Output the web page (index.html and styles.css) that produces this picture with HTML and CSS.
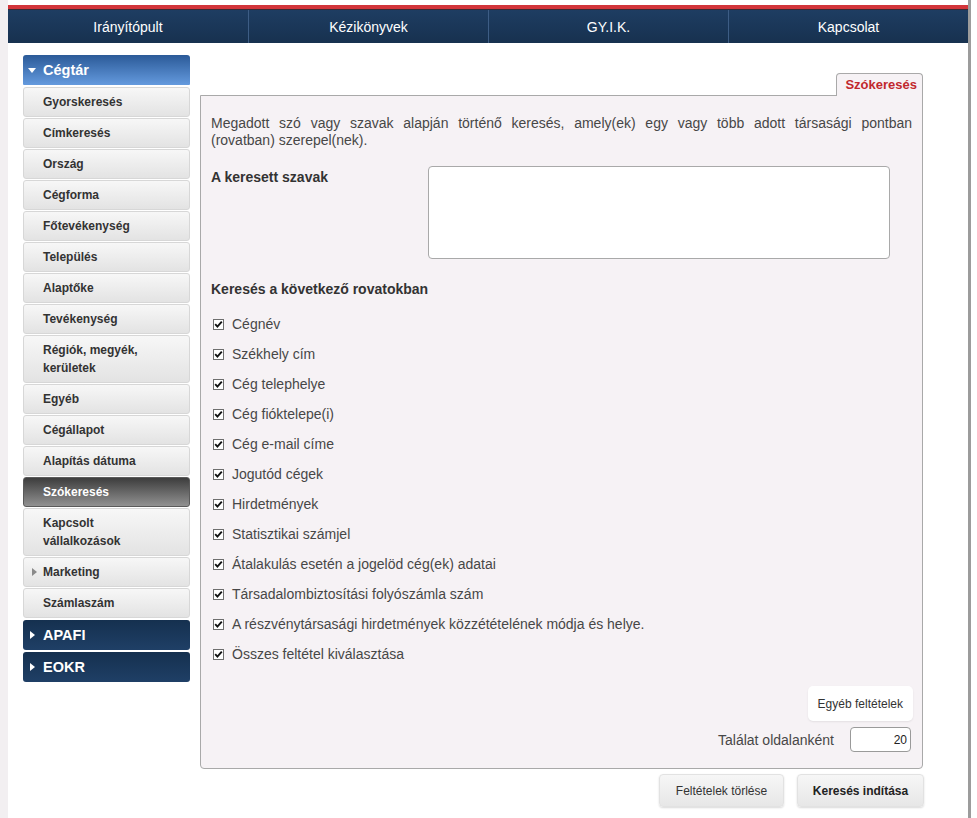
FILE: index.html
```html
<!DOCTYPE html>
<html lang="hu">
<head>
<meta charset="utf-8">
<title>Szókeresés</title>
<link rel="stylesheet" href="styles.css">
</head>
<body>
<div class="frame">
  <div class="topline"></div>
  <nav class="nav">
    <a class="nav-item">Irányítópult</a>
    <a class="nav-item">Kézikönyvek</a>
    <a class="nav-item">GY.I.K.</a>
    <a class="nav-item">Kapcsolat</a>
  </nav>
  <div class="layout">
    <aside class="side">
      <div class="sec sec-open"><span class="tri-down"></span>Cégtár</div>
      <div class="item">Gyorskeresés</div>
      <div class="item">Címkeresés</div>
      <div class="item">Ország</div>
      <div class="item">Cégforma</div>
      <div class="item">Főtevékenység</div>
      <div class="item">Település</div>
      <div class="item">Alaptőke</div>
      <div class="item">Tevékenység</div>
      <div class="item item-2">Régiók, megyék,<br>kerületek</div>
      <div class="item">Egyéb</div>
      <div class="item">Cégállapot</div>
      <div class="item">Alapítás dátuma</div>
      <div class="item active">Szókeresés</div>
      <div class="item item-2">Kapcsolt<br>vállalkozások</div>
      <div class="item has-sub"><span class="tri-right grey"></span>Marketing</div>
      <div class="item">Számlaszám</div>
      <div class="sec sec-closed"><span class="tri-right"></span>APAFI</div>
      <div class="sec sec-closed"><span class="tri-right"></span>EOKR</div>
    </aside>
    <main class="main">
      <div class="tabs"><div class="tab">Szókeresés</div></div>
      <div class="panel">
        <p class="intro"><span class="intro-l1">Megadott szó vagy szavak alapján történő keresés, amely(ek) egy vagy több adott társasági pontban</span>(rovatban) szerepel(nek).</p>
        <div class="words">
          <label class="words-label" for="szavak">A keresett szavak</label>
          <textarea class="words-input" id="szavak"></textarea>
        </div>
        <h3 class="subhead">Keresés a következő rovatokban</h3>
        <ul class="checks">
          <li class="check"><span class="cb"><svg viewBox="0 0 9 9" width="9" height="9"><polyline points="1.2,4.2 3.4,6.6 7.8,1.6" fill="none" stroke="#111" stroke-width="1.9"/></svg></span>Cégnév</li>
          <li class="check"><span class="cb"><svg viewBox="0 0 9 9" width="9" height="9"><polyline points="1.2,4.2 3.4,6.6 7.8,1.6" fill="none" stroke="#111" stroke-width="1.9"/></svg></span>Székhely cím</li>
          <li class="check"><span class="cb"><svg viewBox="0 0 9 9" width="9" height="9"><polyline points="1.2,4.2 3.4,6.6 7.8,1.6" fill="none" stroke="#111" stroke-width="1.9"/></svg></span>Cég telephelye</li>
          <li class="check"><span class="cb"><svg viewBox="0 0 9 9" width="9" height="9"><polyline points="1.2,4.2 3.4,6.6 7.8,1.6" fill="none" stroke="#111" stroke-width="1.9"/></svg></span>Cég fióktelepe(i)</li>
          <li class="check"><span class="cb"><svg viewBox="0 0 9 9" width="9" height="9"><polyline points="1.2,4.2 3.4,6.6 7.8,1.6" fill="none" stroke="#111" stroke-width="1.9"/></svg></span>Cég e-mail címe</li>
          <li class="check"><span class="cb"><svg viewBox="0 0 9 9" width="9" height="9"><polyline points="1.2,4.2 3.4,6.6 7.8,1.6" fill="none" stroke="#111" stroke-width="1.9"/></svg></span>Jogutód cégek</li>
          <li class="check"><span class="cb"><svg viewBox="0 0 9 9" width="9" height="9"><polyline points="1.2,4.2 3.4,6.6 7.8,1.6" fill="none" stroke="#111" stroke-width="1.9"/></svg></span>Hirdetmények</li>
          <li class="check"><span class="cb"><svg viewBox="0 0 9 9" width="9" height="9"><polyline points="1.2,4.2 3.4,6.6 7.8,1.6" fill="none" stroke="#111" stroke-width="1.9"/></svg></span>Statisztikai számjel</li>
          <li class="check"><span class="cb"><svg viewBox="0 0 9 9" width="9" height="9"><polyline points="1.2,4.2 3.4,6.6 7.8,1.6" fill="none" stroke="#111" stroke-width="1.9"/></svg></span>Átalakulás esetén a jogelöd cég(ek) adatai</li>
          <li class="check"><span class="cb"><svg viewBox="0 0 9 9" width="9" height="9"><polyline points="1.2,4.2 3.4,6.6 7.8,1.6" fill="none" stroke="#111" stroke-width="1.9"/></svg></span>Társadalombiztosítási folyószámla szám</li>
          <li class="check"><span class="cb"><svg viewBox="0 0 9 9" width="9" height="9"><polyline points="1.2,4.2 3.4,6.6 7.8,1.6" fill="none" stroke="#111" stroke-width="1.9"/></svg></span>A részvénytársasági hirdetmények közzétételének módja és helye.</li>
          <li class="check"><span class="cb"><svg viewBox="0 0 9 9" width="9" height="9"><polyline points="1.2,4.2 3.4,6.6 7.8,1.6" fill="none" stroke="#111" stroke-width="1.9"/></svg></span>Összes feltétel kiválasztása</li>
        </ul>
        <div class="extra"><button class="extra-btn" type="button">Egyéb feltételek</button></div>
        <div class="perpage">
          <span class="perpage-label">Találat oldalanként</span>
          <input class="perpage-input" type="text" value="20">
        </div>
      </div>
      <div class="actions">
        <button class="act-btn" type="button">Feltételek törlése</button>
        <button class="act-btn primary" type="button">Keresés indítása</button>
      </div>
    </main>
  </div>
</div>
</body>
</html>
```

FILE: styles.css
```css
* { box-sizing: border-box; }

html, body {
  margin: 0;
  padding: 0;
}

body {
  height: 818px;
  overflow: hidden;
  background: linear-gradient(to right, #f2eff1 0, #f2eff1 8px, #ffffff 8px);
  font-family: "Liberation Sans", Arial, sans-serif;
  color: #454545;
}

.frame {
  margin-left: 8px;
  width: 963px;
  min-height: 818px;
  padding-top: 5px;
  background: #fff;
  border-right: 3px solid #9c9c9c;
}

.topline {
  height: 4px;
  background: #d2353a;
}

.nav {
  display: grid;
  grid-template-columns: repeat(4, 1fr);
  height: 34px;
  border-top: 1px solid #3b2a33;
  background: linear-gradient(#1e3d62, #17314f);
}

.nav-item {
  display: flex;
  align-items: center;
  justify-content: center;
  color: #fff;
  font-size: 14px;
  border-left: 1px solid #3d5d85;
}

.nav-item:first-child { border-left: 0; }

.layout {
  display: flex;
  gap: 10px;
  padding: 12px 0 0 15px;
}

/* Sidebar */
.side {
  width: 167px;
  display: flex;
  flex-direction: column;
  gap: 1px;
}

.sec {
  height: 30px;
  display: flex;
  align-items: center;
  color: #fff;
  font-size: 14.5px;
  font-weight: bold;
  border-radius: 3px;
}

.sec-open {
  padding-left: 5px;
  margin-bottom: 1px;
  border-radius: 3px 3px 1px 1px;
  background: linear-gradient(#2b5a98, #649ade);
}

.sec-closed {
  padding-left: 7px;
  margin-top: 1px;
  background: linear-gradient(#15304f, #1f3f66);
}

.tri-down {
  width: 0;
  height: 0;
  border-top: 5px solid #fff;
  border-left: 4px solid transparent;
  border-right: 4px solid transparent;
  margin-right: 7px;
}

.tri-right {
  width: 0;
  height: 0;
  border-left: 5px solid #fff;
  border-top: 4px solid transparent;
  border-bottom: 4px solid transparent;
  margin-right: 8px;
}

.tri-right.grey {
  border-left-color: #8a8a8a;
  margin-right: 6px;
}

.item {
  height: 30px;
  padding: 5px 4px 5px 19px;
  line-height: 18px;
  font-size: 12px;
  font-weight: bold;
  color: #333;
  border: 1px solid #d7d7d7;
  border-radius: 3px;
  background: linear-gradient(#f7f7f7, #e3e3e3);
}

.item-2 { height: 48px; }

.has-sub {
  display: flex;
  align-items: center;
  padding-left: 8px;
}

.active {
  color: #fff;
  border-color: #5a5a5a;
  background: linear-gradient(#3d3d3d, #919191);
}

/* Main */
.main {
  width: 723px;
  margin-top: 18px;
}

.tabs {
  display: flex;
  justify-content: flex-end;
  height: 22px;
}

.tab {
  position: relative;
  z-index: 1;
  height: 23px;
  padding: 0 5px 0 8px;
  border: 1px solid #a9a9a9;
  border-bottom: 0;
  border-radius: 4px 4px 0 0;
  background: #f6f2f5;
  color: #c1272d;
  font-size: 13px;
  font-weight: bold;
  line-height: 22px;
}

.panel {
  border: 1px solid #a9a9a9;
  border-radius: 0 0 4px 4px;
  background: #f6f2f5;
  padding: 19px 10px 16px 10px;
}

.intro {
  margin: 0;
  font-size: 14px;
  line-height: 17px;
  text-align: justify;
  color: #474747;
}

.intro-l1 {
  display: block;
  text-align-last: justify;
}

.words {
  display: flex;
  margin-top: 17px;
}

.words-label {
  width: 217px;
  padding-top: 3px;
  font-size: 14px;
  line-height: 17px;
  font-weight: bold;
  color: #333;
}

.words-input {
  width: 462px;
  height: 93px;
  margin: 0;
  border: 1px solid #a9a9a9;
  border-radius: 4px;
  background: #fff;
  resize: none;
}

.subhead {
  margin: 22px 0 0;
  font-size: 14px;
  line-height: 17px;
  font-weight: bold;
  color: #333;
}

.checks {
  list-style: none;
  margin: 11px 0 0;
  padding: 0 0 0 2px;
}

.check {
  height: 30px;
  display: flex;
  align-items: center;
  font-size: 14px;
  color: #474747;
}

.cb {
  width: 11px;
  height: 11px;
  display: flex;
  align-items: center;
  justify-content: center;
  margin-right: 8px;
  border: 1px solid #6e6e6e;
  background: #fff;
}

.extra {
  display: flex;
  justify-content: flex-end;
  margin: 17px -1px 0 0;
}

.extra-btn {
  height: 35px;
  padding: 0 10px;
  border: 0;
  border-radius: 5px;
  background: #fff;
  box-shadow: 0 1px 2px rgba(0, 0, 0, 0.08);
  font-family: inherit;
  font-size: 12px;
  color: #333;
}

.perpage {
  display: flex;
  justify-content: flex-end;
  align-items: center;
  gap: 16px;
  margin: 6px 1px 0 0;
  font-size: 14px;
  color: #474747;
}

.perpage-input {
  width: 61px;
  height: 25px;
  margin: 0;
  padding: 0 3px 0 0;
  border: 1px solid #9a9a9a;
  border-radius: 4px;
  background: #fff;
  text-align: right;
  font-family: inherit;
  font-size: 12px;
  color: #222;
}

.actions {
  display: flex;
  justify-content: flex-end;
  gap: 13px;
  margin: 5px -1px 0 0;
}

.act-btn {
  width: 125px;
  height: 33px;
  border: 1px solid #e2e2e2;
  border-radius: 4px;
  background: linear-gradient(#f6f6f6, #e7e7e7);
  box-shadow: 0 1px 2px rgba(0, 0, 0, 0.15);
  font-family: inherit;
  font-size: 12px;
  color: #333;
}

.primary {
  width: 127px;
  font-weight: bold;
  color: #222;
}
```
